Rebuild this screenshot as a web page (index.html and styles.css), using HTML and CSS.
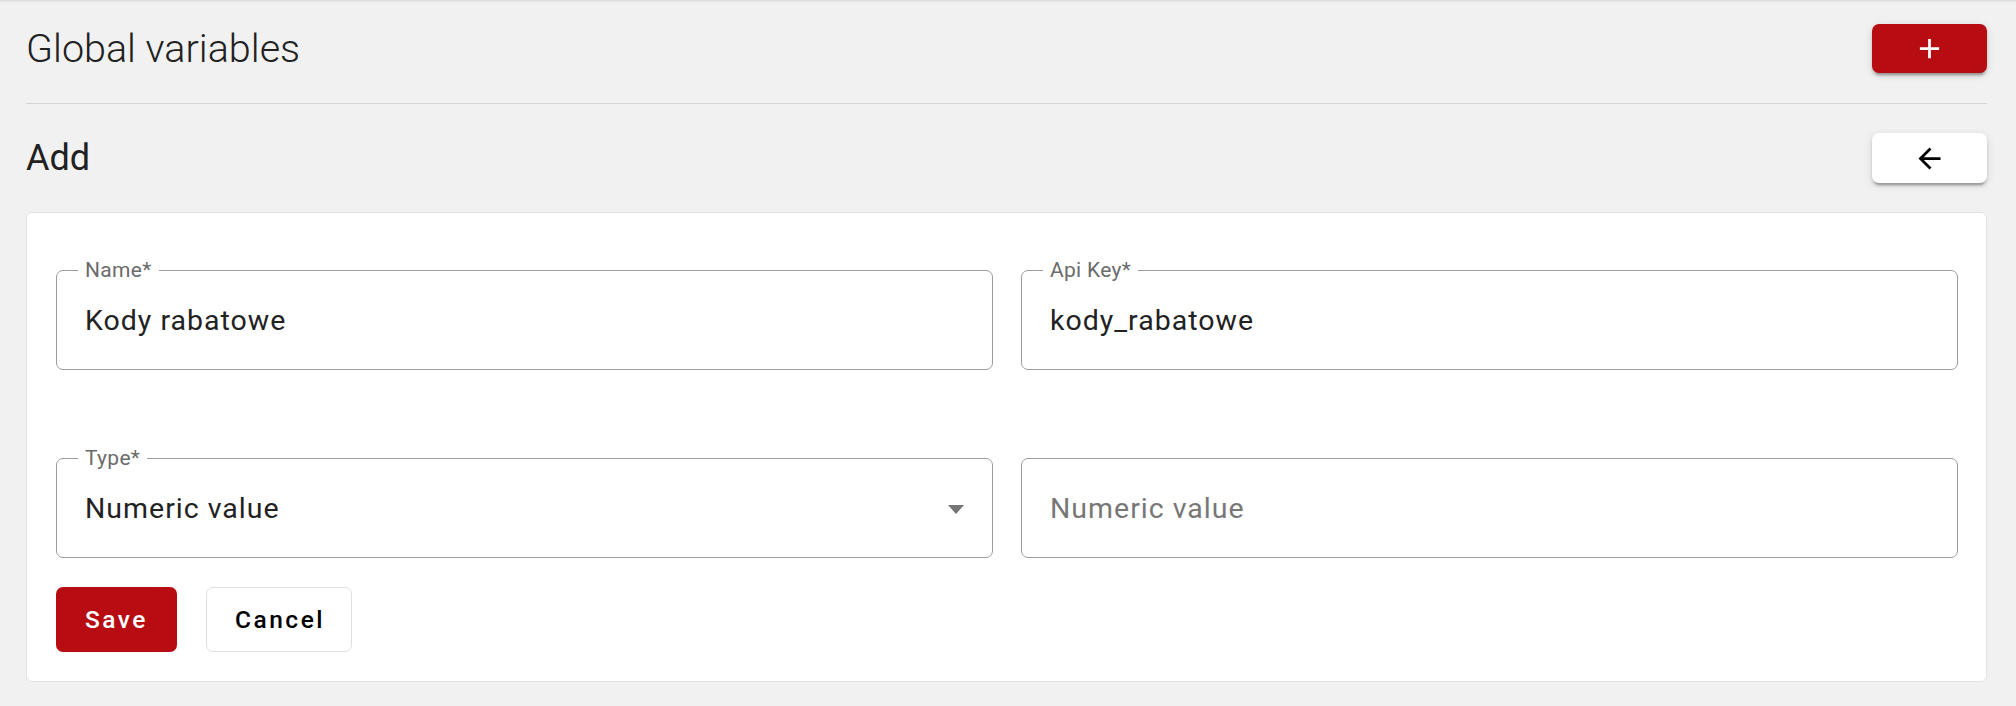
FILE: index.html
```html
<!DOCTYPE html>
<html lang="en">
<head>
<meta charset="utf-8">
<title>Global variables</title>
<link rel="stylesheet" href="styles.css">
</head>
<body>
<div class="page">
  <div class="header">
    <h1 class="title">Global variables</h1>
    <button class="icon-btn primary" type="button" aria-label="Add">
      <svg class="icon" viewBox="0 0 24 24"><path d="M19 13h-6v6h-2v-6H5v-2h6V5h2v6h6v2z" fill="#ffffff"/></svg>
    </button>
  </div>
  <div class="divider"></div>
  <div class="subheader">
    <h2 class="subtitle">Add</h2>
    <button class="icon-btn light" type="button" aria-label="Back">
      <svg class="icon" viewBox="0 0 24 24"><path d="M20 11H7.83l5.59-5.59L12 4l-8 8 8 8 1.41-1.41L7.83 13H20v-2z" fill="#000000"/></svg>
    </button>
  </div>
  <div class="card">
    <div class="form-grid">
      <div class="field">
        <span class="field-label">Name*</span>
        <span class="field-value">Kody rabatowe</span>
      </div>
      <div class="field">
        <span class="field-label">Api Key*</span>
        <span class="field-value">kody_rabatowe</span>
      </div>
      <div class="field">
        <span class="field-label">Type*</span>
        <span class="field-value">Numeric value</span>
        <span class="select-arrow"></span>
      </div>
      <div class="field">
        <span class="field-value placeholder">Numeric value</span>
      </div>
    </div>
    <div class="actions">
      <button class="btn btn-save" type="button">Save</button>
      <button class="btn btn-cancel" type="button">Cancel</button>
    </div>
  </div>
</div>
</body>
</html>
```

FILE: styles.css
```css
* {
  box-sizing: border-box;
}

html, body {
  margin: 0;
  padding: 0;
}

body {
  background: #f1f1f1;
  font-family: Roboto, "Noto Sans", "Liberation Sans", sans-serif;
  color: #212121;
  min-height: 706px;
  box-shadow: inset 0 4px 3px -3px rgba(0, 0, 0, 0.12);
}

.page {
  padding: 24px 29px 0 26px;
}

.header,
.subheader {
  display: flex;
  align-items: center;
  justify-content: space-between;
}

.title {
  margin: 0;
  font-size: 39.5px;
  line-height: 48px;
  font-weight: 300;
  color: #212121;
  letter-spacing: 0;
}

.divider {
  height: 1px;
  background: #d5d5d5;
  margin-top: 30px;
}

.subheader {
  margin-top: 29px;
}

.subtitle {
  margin: 0;
  font-size: 36px;
  line-height: 44px;
  font-weight: 400;
  color: #212121;
}

.icon-btn {
  width: 115px;
  height: 49px;
  border: none;
  border-radius: 7px;
  display: flex;
  align-items: center;
  justify-content: center;
  padding: 0;
  cursor: pointer;
  box-shadow: 0 5px 2px -3px rgba(0, 0, 0, 0.2), 0 3px 3px 0 rgba(0, 0, 0, 0.14), 0 2px 8px 0 rgba(0, 0, 0, 0.12);
}

.icon-btn.primary {
  background: #b70c12;
}

.icon-btn.light {
  background: #ffffff;
  height: 50px;
}

.icon {
  width: 33px;
  height: 33px;
  display: block;
}

.card {
  margin-top: 29px;
  background: #ffffff;
  border: 1px solid #e2e2e2;
  border-radius: 6px;
  padding: 57px 28px 29px 29px;
}

.form-grid {
  display: grid;
  grid-template-columns: 1fr 1fr;
  column-gap: 28px;
  row-gap: 88px;
}

.field {
  position: relative;
  height: 100px;
  border: 1px solid #9c9c9c;
  border-radius: 7px;
  display: flex;
  align-items: center;
  padding: 0 28px;
}

.field-label {
  position: absolute;
  left: 21px;
  top: -11px;
  padding: 0 7px;
  background: #ffffff;
  font-size: 21px;
  line-height: 21px;
  color: #6b6b6b;
  letter-spacing: 0.3px;
}

.field-value {
  font-size: 28.5px;
  line-height: 34px;
  padding-top: 2px;
  color: #222222;
  letter-spacing: 1px;
}

.field-value.placeholder {
  color: #777777;
}

.select-arrow {
  margin-left: auto;
  margin-top: 2px;
  width: 0;
  height: 0;
  border-left: 8.5px solid transparent;
  border-right: 8.5px solid transparent;
  border-top: 9px solid #757575;
}

.actions {
  display: flex;
  gap: 29px;
  margin-top: 29px;
}

.btn {
  height: 65px;
  border-radius: 7px;
  font-family: Roboto, "Noto Sans", "Liberation Sans", sans-serif;
  font-size: 24.5px;
  font-weight: 500;
  letter-spacing: 2.5px;
  padding: 0 28px;
  cursor: pointer;
}

.btn-save {
  background: #b70c12;
  color: #ffffff;
  border: none;
  width: 121px;
}

.btn-cancel {
  background: #ffffff;
  color: #000000;
  border: 1px solid #e0e0e0;
  width: 146px;
}
```
